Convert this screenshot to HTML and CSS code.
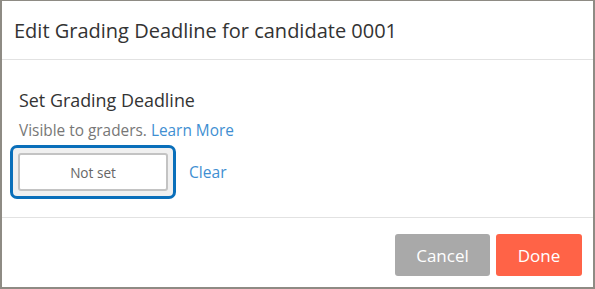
FILE: index.html
```html
<!DOCTYPE html>
<html>
<head>
<meta charset="utf-8">
<link rel="stylesheet" href="styles.css">
</head>
<body>
<div class="frame">
  <div class="header">
    <h1 class="title">Edit Grading Deadline for candidate 0001</h1>
  </div>
  <div class="content">
    <div class="label">Set Grading Deadline</div>
    <div class="hint">Visible to graders. <a class="link" href="#">Learn More</a></div>
    <div class="row">
      <div class="focus">
        <div class="input">Not set</div>
      </div>
      <a class="link clear" href="#">Clear</a>
    </div>
  </div>
  <div class="footer">
    <button class="btn cancel">Cancel</button>
    <button class="btn done">Done</button>
  </div>
</div>
</body>
</html>
```

FILE: styles.css
```css
html, body {
  margin: 0;
  padding: 0;
  background: #ffffff;
}
body {
  width: 595px;
  height: 289px;
  overflow: hidden;
  font-family: "Open Sans", "Noto Sans", sans-serif;
}
.frame {
  box-sizing: border-box;
  width: 595px;
  height: 289px;
  border-left: 2px solid #8e8b84;
  border-top: 1px solid #8e8b84;
  border-right: 2px solid #8e8b84;
  border-bottom: 2px solid #8e8b84;
  display: flex;
  flex-direction: column;
  background: #fff;
}
.header {
  height: 58px;
  border-bottom: 1px solid #e2e2e2;
  display: flex;
  align-items: center;
  padding-left: 12px;
}
.title {
  margin: 0;
  font-size: 20px;
  font-weight: 400;
  color: #333;
  line-height: 26px;
  margin-top: 2px;
}
.content {
  height: 158px;
  border-bottom: 1px solid #e2e2e2;
  padding: 29px 0 0 17px;
  box-sizing: border-box;
}
.label {
  font-size: 17.9px;
  color: #333;
  line-height: 22px;
}
.hint {
  font-size: 15.4px;
  color: #777;
  line-height: 20px;
  margin-top: 10px;
}
.link {
  color: #3f8fd2;
  text-decoration: none;
}
.row {
  display: flex;
  align-items: center;
  margin-top: 4px;
  margin-left: -9px;
}
.focus {
  border: 3.5px solid #0a6fba;
  border-radius: 7px;
  padding: 5px;
  background: #f0f0f0;
}
.input {
  box-sizing: border-box;
  width: 150px;
  height: 38px;
  border: 2px solid #c3c3c3;
  border-radius: 3px;
  background: #fff;
  color: #666;
  font-size: 13.6px;
  display: flex;
  align-items: center;
  justify-content: center;
}
.clear {
  font-size: 15.6px;
  margin-left: 13px;
}
.footer {
  flex: 1;
  display: flex;
  justify-content: flex-end;
  align-items: flex-start;
  padding: 16px 11px 0 0;
  gap: 6px;
}
.btn {
  height: 42px;
  border: none;
  border-radius: 3px;
  color: #fff;
  font-family: "Open Sans", "Noto Sans", sans-serif;
  font-size: 17px;
  padding: 0;
}
.cancel {
  width: 95px;
  background: #a9a9a9;
}
.done {
  width: 86px;
  background: #ff6347;
}
```
